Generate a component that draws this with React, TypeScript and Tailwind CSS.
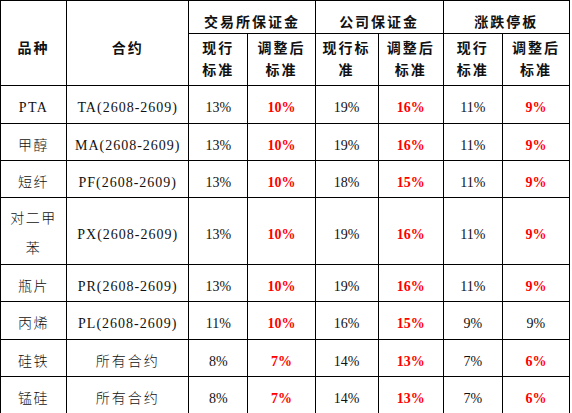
type Row = {
  name: string;
  contract: string;
  cells: [string, boolean][];
  tall?: boolean;
};

const rows: Row[] = [
  { name: "PTA", contract: "TA(2608-2609)", cells: [["13%", false], ["10%", true], ["19%", false], ["16%", true], ["11%", false], ["9%", true]] },
  { name: "甲醇", contract: "MA(2608-2609)", cells: [["13%", false], ["10%", true], ["19%", false], ["16%", true], ["11%", false], ["9%", true]] },
  { name: "短纤", contract: "PF(2608-2609)", cells: [["13%", false], ["10%", true], ["18%", false], ["15%", true], ["11%", false], ["9%", true]] },
  { name: "对二甲苯", contract: "PX(2608-2609)", tall: true, cells: [["13%", false], ["10%", true], ["19%", false], ["16%", true], ["11%", false], ["9%", true]] },
  { name: "瓶片", contract: "PR(2608-2609)", cells: [["13%", false], ["10%", true], ["19%", false], ["16%", true], ["11%", false], ["9%", true]] },
  { name: "丙烯", contract: "PL(2608-2609)", cells: [["11%", false], ["10%", true], ["16%", false], ["15%", true], ["9%", false], ["9%", false]] },
  { name: "硅铁", contract: "所有合约", cells: [["8%", false], ["7%", true], ["14%", false], ["13%", true], ["7%", false], ["6%", true]] },
  { name: "锰硅", contract: "所有合约", cells: [["8%", false], ["7%", true], ["14%", false], ["13%", true], ["7%", false], ["6%", true]] },
];

const heights = ["h-[38px]", "h-[37px]", "h-[37px]", "h-[65px]", "h-[37px]", "h-[38px]", "h-[37px]", "h-[37px]"];

const td = "border border-black text-center align-middle p-0 pt-[6px]";
const th = "border border-black text-center align-middle p-0 font-bold tracking-[2px]";

export default function App() {
  return (
    <main className="min-h-screen bg-white text-[#111] font-['Liberation_Serif','Noto_Sans_CJK_SC',serif] text-[14px]">
      <table className="table-fixed border-collapse w-[570px]">
        <colgroup>
          <col className="w-[66px]" />
          <col className="w-[122px]" />
          <col className="w-[59px]" />
          <col className="w-[67px]" />
          <col className="w-[63px]" />
          <col className="w-[65px]" />
          <col className="w-[59px]" />
          <col className="w-[67px]" />
        </colgroup>
        <thead>
          <tr className="h-[31px]">
            <th rowSpan={2} className={th + " pt-[10px]"}>品种</th>
            <th rowSpan={2} className={th + " pt-[10px]"}>合约</th>
            <th colSpan={2} className={th + " pt-[11px]"}>交易所保证金</th>
            <th colSpan={2} className={th + " pt-[11px]"}>公司保证金</th>
            <th colSpan={2} className={th + " pt-[11px]"}>涨跌停板</th>
          </tr>
          <tr className="h-[52px] leading-[22px]">
            <th className={th}>现行<br />标准</th>
            <th className={th}>调整后<br />标准</th>
            <th className={th}>现行标<br />准</th>
            <th className={th}>调整后<br />标准</th>
            <th className={th}>现行<br />标准</th>
            <th className={th}>调整后<br />标准</th>
          </tr>
        </thead>
        <tbody>
          {rows.map((r, i) => (
            <tr key={r.name} className={heights[i]}>
              <td className={td + " font-light tracking-[1.5px]" + (r.tall ? " leading-[30px]" : "")}>
                {r.tall ? (
                  <>
                    对二甲
                    <br />
                    苯
                  </>
                ) : (
                  r.name
                )}
              </td>
              <td className={td + " font-light " + (r.contract === "所有合约" ? "tracking-[2px]" : "tracking-[1px]")}>
                {r.contract}
              </td>
              {r.cells.map(([v, red], j) => (
                <td key={j} className={td + (red ? " font-bold text-[#ff0000]" : " font-light")}>
                  {v}
                </td>
              ))}
            </tr>
          ))}
        </tbody>
      </table>
    </main>
  );
}
